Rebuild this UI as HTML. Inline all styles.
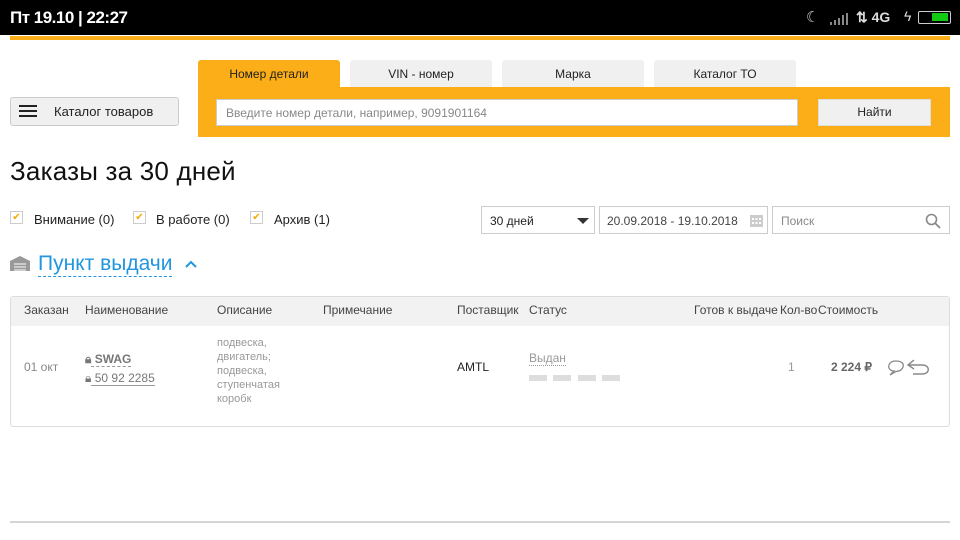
<!DOCTYPE html>
<html><head><meta charset="utf-8"><style>
*{box-sizing:border-box;margin:0;padding:0}
body{width:960px;height:540px;overflow:hidden;background:#fff;font-family:"Liberation Sans",sans-serif;position:relative;color:#222}
.a{position:absolute}
.sb{left:0;top:0;width:960px;height:35px;background:#000;color:#fff}
.tab{top:60px;height:27px;background:#f0f0f0;border-radius:3px 3px 0 0;font-size:12px;text-align:center;line-height:29px;color:#222}
.box{border:1px solid #ccc;background:#fff;font-size:12px;color:#444;white-space:nowrap}
.th{font-size:12px;color:#444;top:303px}
.cb{width:13px;height:13px;border:1px solid #ccc;top:211px;color:#f5a800;font-size:10px;line-height:11px;text-align:center}
.cl{top:212px;font-size:13px;color:#222}
.g{background:#ddd;height:6px;width:18px;top:375px}
</style></head><body>
<div class="a sb"><div class="a" style="left:10px;top:8px;font-size:17px;font-weight:bold;letter-spacing:-0.5px">Пт 19.10 | 22:27</div>
<div class="a" style="left:806px;top:8px;font-size:15px;color:#ccc">☾</div>
<div class="a" style="left:830px;top:12px;width:20px;height:12px"><svg width="20" height="12"><g fill="#888"><rect x="0" y="9" width="2" height="3"/><rect x="4" y="7" width="2" height="5"/><rect x="8" y="5" width="2" height="7"/><rect x="12" y="2" width="2" height="10"/><rect x="16" y="0" width="2" height="12"/></g></svg></div>
<div class="a" style="left:856px;top:9px;font-size:14px;font-weight:bold;color:#ddd">⇅ 4G</div>
<div class="a" style="left:904px;top:8px;font-size:14px;color:#ddd">ϟ</div>
<div class="a" style="left:918px;top:11px;width:33px;height:13px;border:1.5px solid #ccc;border-radius:2px"><div class="a" style="left:13px;top:1px;width:16px;height:8px;background:#1c1"></div></div>
</div>
<div class="a" style="left:10px;top:36px;width:940px;height:4px;background:#fbae17"></div>
<div class="a tab" style="left:198px;width:142px;background:#fbae17">Номер детали</div>
<div class="a tab" style="left:350px;width:142px">VIN - номер</div>
<div class="a tab" style="left:502px;width:142px">Марка</div>
<div class="a tab" style="left:654px;width:142px">Каталог ТО</div>
<div class="a" style="left:198px;top:87px;width:752px;height:50px;background:#fbae17"></div>
<div class="a box" style="left:216px;top:99px;width:582px;height:27px;padding:6px 9px;color:#888">Введите номер детали, например, 9091901164</div>
<div class="a" style="left:818px;top:99px;width:113px;height:27px;background:#f0f0f0;border:1px solid #ddd;font-size:12px;text-align:center;line-height:25px">Найти</div>
<div class="a" style="left:10px;top:97px;width:169px;height:29px;background:#f0f0f0;border:1px solid #ccc;border-radius:3px;font-size:13px;line-height:27px;padding-left:43px">Каталог товаров</div>
<div class="a" style="left:19px;top:105px;width:18px;height:12px;border-top:2px solid #222;border-bottom:2px solid #222"><div style="margin-top:3px;height:2px;background:#222"></div></div>
<div class="a" style="left:10px;top:156px;font-size:26px;color:#111;letter-spacing:0.2px">Заказы за 30 дней</div>
<div class="a cb" style="left:10px">✔</div><div class="a cl" style="left:34px">Внимание (0)</div>
<div class="a cb" style="left:133px">✔</div><div class="a cl" style="left:156px">В работе (0)</div>
<div class="a cb" style="left:250px">✔</div><div class="a cl" style="left:274px">Архив (1)</div>
<div class="a box" style="left:481px;top:206px;width:114px;height:28px;padding:7px 8px;color:#222">30 дней<span class="a" style="left:95px;top:11px;border:6px solid transparent;border-top:6px solid #333;border-bottom:0"></span></div>
<div class="a box" style="left:599px;top:206px;width:169px;height:28px;padding:7px 7px;font-size:12px">20.09.2018 - 19.10.2018
<svg class="a" style="left:150px;top:7px" width="13" height="13"><rect x="0" y="1" width="13" height="12" fill="#ccc"/><g fill="#fff"><rect x="2" y="4" width="2" height="2"/><rect x="5.5" y="4" width="2" height="2"/><rect x="9" y="4" width="2" height="2"/><rect x="2" y="8" width="2" height="2"/><rect x="5.5" y="8" width="2" height="2"/><rect x="9" y="8" width="2" height="2"/></g></svg></div>
<div class="a box" style="left:772px;top:206px;width:178px;height:28px;padding:7px 8px;color:#888">Поиск
<svg class="a" style="left:152px;top:6px" width="16" height="16"><circle cx="6.5" cy="6.5" r="5" fill="none" stroke="#888" stroke-width="1.6"/><line x1="10" y1="10" x2="15" y2="15" stroke="#888" stroke-width="1.8"/></svg></div>
<svg class="a" style="left:10px;top:255px" width="20" height="16"><path d="M0 6 L10 1 L20 6 L20 16 L0 16Z" fill="#999"/><rect x="4" y="8" width="12" height="8" fill="#ccc"/><rect x="4" y="10" width="12" height="1" fill="#999"/><rect x="4" y="13" width="12" height="1" fill="#999"/></svg>
<div class="a" style="left:38px;top:251px;font-size:21px;color:#2196de;border-bottom:1px dashed #2196de;line-height:25px">Пункт выдачи</div>
<svg class="a" style="left:185px;top:260px" width="12" height="8"><path d="M1 7 L6 2 L11 7" fill="none" stroke="#2196de" stroke-width="2"/></svg>
<div class="a" style="left:10px;top:296px;width:940px;height:131px;border:1px solid #ddd;border-radius:3px"><div style="height:29px;background:#f2f2f2"></div></div>
<div class="a th" style="left:24px">Заказан</div>
<div class="a th" style="left:85px">Наименование</div>
<div class="a th" style="left:217px">Описание</div>
<div class="a th" style="left:323px">Примечание</div>
<div class="a th" style="left:457px">Поставщик</div>
<div class="a th" style="left:529px">Статус</div>
<div class="a th" style="left:694px;width:86px;overflow:hidden;white-space:nowrap">Готов к выдаче</div>
<div class="a th" style="left:780px;width:38px;overflow:hidden;white-space:nowrap">Кол-во</div>
<div class="a th" style="left:818px">Стоимость</div>
<div class="a" style="left:24px;top:360px;font-size:12px;color:#888">01 окт</div>
<div class="a" style="left:85px;top:352px;font-size:12px;color:#777;font-weight:bold">🔒︎<span style="border-bottom:1px dashed #999"> SWAG</span></div>
<div class="a" style="left:85px;top:371px;font-size:12px;color:#777">🔒︎<span style="border-bottom:1px solid #999"> 50 92 2285</span></div>
<div class="a" style="left:217px;top:336px;font-size:11px;color:#999;line-height:14px">подвеска,<br>двигатель;<br>подвеска,<br>ступенчатая<br>коробк</div>
<div class="a" style="left:457px;top:360px;font-size:12px;color:#222">AMTL</div>
<div class="a" style="left:529px;top:351px;font-size:12px;color:#999;border-bottom:1px dotted #999">Выдан</div>
<div class="a g" style="left:529px"></div><div class="a g" style="left:553px"></div><div class="a g" style="left:578px"></div><div class="a g" style="left:602px"></div>
<div class="a" style="left:788px;top:360px;font-size:12px;color:#999">1</div>
<div class="a" style="left:831px;top:360px;font-size:12px;color:#666;font-weight:bold">2 224 ₽</div>
<svg class="a" style="left:886px;top:357px" width="46" height="20"><path d="M10 4 C4 4 2 8 3 11 C4 13 6 14 8 14 L4 18 L10 14.5 C16 14 18 10 17 7 C16 5 13 4 10 4Z" fill="none" stroke="#888" stroke-width="1.3"/><path d="M28 3 L22 8 L28 12 M22 8 L36 8 C41 8 43 11 42 14 C41 16 39 17 36 17 L27 17" fill="none" stroke="#888" stroke-width="1.4"/></svg>
<div class="a" style="left:10px;top:521px;width:940px;height:2px;background:#d5d5d5"></div>
</body></html>
